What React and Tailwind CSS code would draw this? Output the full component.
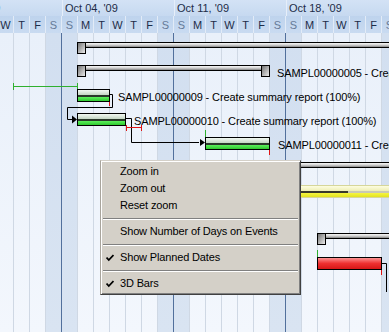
const days = 'WTFSSMTWTFSSMTWTFSSMTWTFS'.split('')
const weeks = ["Sep 27, '09", "Oct 04, '09", "Oct 11, '09", "Oct 18, '09"]

function Summary({ x1, x2, y, right = false }) {
  return (
    <g>
      <rect x={x1 + 0.5} y={y + 0.5} width={x2 - x1 - 1} height={5} fill="url(#sum)" stroke="#000" />
      <rect x={x1 + 0.5} y={y + 0.5} width={8} height={11} fill="url(#sq)" stroke="#000" />
      {right && <rect x={x2 - 8.5} y={y + 0.5} width={8} height={11} fill="url(#sq)" stroke="#000" />}
    </g>
  )
}

function Task({ x, y, w, topFill, band, bottomFill, stroke = '#000', progress }) {
  const p = progress ?? w
  return (
    <g>
      <rect x={x} y={y + 1} width={w} height={5} fill={topFill} />
      <rect x={x} y={y + 6} width={p} height={2} fill={band} />
      {p < w && <rect x={x + p} y={y + 6} width={w - p} height={2} fill="#c9c9b4" />}
      <rect x={x} y={y + 8} width={w} height={4} fill={bottomFill} />
      <rect x={x + 0.5} y={y + 0.5} width={w - 1} height={12} fill="none" stroke={stroke} />
    </g>
  )
}

function Check() {
  return (
    <svg className="absolute left-[5px] top-[5px]" width="8" height="8" viewBox="0 0 8 8">
      <path d="M0.5 3.5 L2.8 6 L7.5 1" fill="none" stroke="#000" strokeWidth="1.8" />
    </svg>
  )
}

function Item({ label, checked }) {
  return (
    <div className="relative h-[17px] pl-[19px] leading-[17px] text-black tracking-[-0.15px]">
      {checked && <Check />}
      {label}
    </div>
  )
}

function Sep() {
  return (
    <div className="h-[9px] mx-[2px] pt-[4px]">
      <div className="h-[1px] bg-[#808080]" />
      <div className="h-[1px] bg-white" />
    </div>
  )
}

function Label({ x, y, text }) {
  return (
    <div className="absolute whitespace-nowrap text-[11px] leading-[14px] tracking-[-0.12px] text-black" style={{ left: x, top: y }}>
      {text}
    </div>
  )
}

export default function App() {
  return (
    <div className="relative w-[389px] h-[332px] overflow-hidden bg-[#eef4fb] font-['Liberation_Sans',Arial,sans-serif] text-[11px]">
      <div className="flex h-[16px] ml-[-50px] bg-linear-to-b from-[#d3e2f5] to-[#c6d9f0]">
        {weeks.map((w, i) => (
          <div
            key={w}
            className={`w-[112px] shrink-0 border-l border-l-[#e6eef9] leading-[16px] text-[#1d2c48] whitespace-nowrap overflow-hidden ${i === 0 ? 'pl-[0px] indent-[-6px]' : 'pl-[2px]'}`}
          >
            {w}
          </div>
        ))}
      </div>
      <div className="flex h-[17px] ml-[-2px] bg-linear-to-b from-[#bed3ed] to-[#c9dbf1]">
        {days.map((d, i) => {
          const weekend = i % 7 === 3 || i % 7 === 4
          return (
            <div
              key={i}
              className={`w-[16px] shrink-0 border-r border-r-[#e2ebf7] text-center pt-[2px] leading-[15px] ${weekend ? 'text-[#667a98]' : 'text-[#1d2c48]'}`}
            >
              {d}
            </div>
          )
        })}
      </div>
      <div className="flex h-[299px] ml-[-2px]">
        {days.map((d, i) => {
          const weekend = i % 7 === 3 || i % 7 === 4
          const sat = i % 7 === 3
          return (
            <div
              key={i}
              className={`w-[16px] shrink-0 h-full border-r ${sat ? 'border-r-[#52709c]' : 'border-r-[#cfd8e4]'} ${weekend ? 'bg-linear-to-b from-[#d2dff0] to-[#d9e4f2]' : 'bg-linear-to-b from-[#e9f0fa] to-[#f3f7fd]'}`}
            />
          )
        })}
      </div>

      <svg className="absolute left-0 top-0" width="389" height="332">
        <defs>
          <linearGradient id="sum" x1="0" y1="0" x2="0" y2="1">
            <stop offset="0" stopColor="#ffffff" />
            <stop offset="0.5" stopColor="#d2d2d2" />
            <stop offset="1" stopColor="#707070" />
          </linearGradient>
          <linearGradient id="sq" x1="0" y1="0" x2="1" y2="1">
            <stop offset="0" stopColor="#6c6c6c" />
            <stop offset="1" stopColor="#f2f2f2" />
          </linearGradient>
          <linearGradient id="gTop" x1="0" y1="0" x2="0" y2="1">
            <stop offset="0" stopColor="#f2f8f2" />
            <stop offset="1" stopColor="#c4d6c4" />
          </linearGradient>
          <linearGradient id="gBot" x1="0" y1="0" x2="0" y2="1">
            <stop offset="0" stopColor="#5cf05c" />
            <stop offset="1" stopColor="#30c830" />
          </linearGradient>
          <linearGradient id="yTop" x1="0" y1="0" x2="0" y2="1">
            <stop offset="0" stopColor="#fdfde0" />
            <stop offset="1" stopColor="#eeeeb4" />
          </linearGradient>
          <linearGradient id="yBot" x1="0" y1="0" x2="0" y2="1">
            <stop offset="0" stopColor="#f6f640" />
            <stop offset="1" stopColor="#e2e222" />
          </linearGradient>
          <linearGradient id="red" x1="0" y1="0" x2="0" y2="1">
            <stop offset="0" stopColor="#ffa0a0" />
            <stop offset="0.3" stopColor="#f45858" />
            <stop offset="0.5" stopColor="#ee3030" />
            <stop offset="1" stopColor="#d41414" />
          </linearGradient>
        </defs>

        <Summary x1={77} x2={400} y={42} />
        <Summary x1={77} x2={270} y={65} right />

        <g stroke="#2fb02f" fill="none">
          <path d="M13 86.5 H77" />
          <path d="M13.5 83 V90" />
          <path d="M77.5 83 V90" />
          <path d="M205.5 130 V137" />
          <path d="M317.5 250 V257" />
        </g>

        <g stroke="#000" fill="none">
          <path d="M110 94.5 H112.5 V107.5 H67.5 V119.5 H72" />
          <path d="M126 118.5 H131.5 V142.5 H199" />
          <path d="M382 263.5 H386.5 V292" />
        </g>
        <polygon points="72,115.5 77,119.5 72,123.5" fill="#000" />
        <polygon points="200,139 205,142.5 200,146" fill="#000" />

        <Task x={77} y={89} w={33} topFill="url(#gTop)" band="#2a382a" bottomFill="url(#gBot)" />
        <Task x={77} y={113} w={49} topFill="url(#gTop)" band="#2a382a" bottomFill="url(#gBot)" />
        <Task x={205} y={137} w={65} topFill="url(#gTop)" band="#2a382a" bottomFill="url(#gBot)" />

        <g stroke="#e01414" fill="none">
          <path d="M109.5 102 V106" />
          <path d="M126 127.5 H142" />
          <path d="M126.5 125 V131" />
          <path d="M141.5 125 V131" />
          <path d="M269.5 150 V155" />
          <path d="M381.5 270 V275" />
        </g>

        <Summary x1={250} x2={400} y={162} />
        <Task x={250} y={185} w={150} topFill="url(#yTop)" band="#38382c" bottomFill="url(#yBot)" stroke="#d6d69a" progress={98} />
        <Summary x1={317} x2={400} y={233} />
        <rect x={317.5} y={257.5} width={64} height={12} fill="url(#red)" stroke="#000" />
      </svg>

      <Label x={277} y={66} text="SAMPL00000005 - Create summary report (100%)" />
      <Label x={118} y={90} text="SAMPL00000009 - Create summary report (100%)" />
      <Label x={134} y={114} text="SAMPL00000010 - Create summary report (100%)" />
      <Label x={278} y={138} text="SAMPL00000011 - Create summary report (100%)" />

      <div className="absolute left-[100px] top-[160px] w-[201px] h-[135px] bg-[#d4d0c8] border border-t-[#d4d0c8] border-l-[#a8a49c] border-r-[#404040] border-b-[#404040] shadow-[inset_1px_1px_0_#ffffff,inset_-1px_-1px_0_#808080] pt-[2px]">
        <Item label="Zoom in" />
        <Item label="Zoom out" />
        <Item label="Reset zoom" />
        <Sep />
        <Item label="Show Number of Days on Events" />
        <Sep />
        <Item label="Show Planned Dates" checked />
        <Sep />
        <Item label="3D Bars" checked />
      </div>
    </div>
  )
}
